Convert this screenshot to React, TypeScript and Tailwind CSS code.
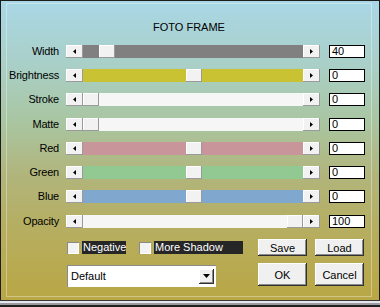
import React from "react";

type Row = { label: string; track: string; thumb: number; value: string };

const rows: Row[] = [
  { label: "Width", track: "bg-[#808080]", thumb: 16, value: "40" },
  { label: "Brightness", track: "bg-[#c9c233]", thumb: 103, value: "0" },
  { label: "Stroke", track: "bg-[#f6f6f6]", thumb: 0, value: "0" },
  { label: "Matte", track: "bg-[#f6f6f6]", thumb: 0, value: "0" },
  { label: "Red", track: "bg-[#c8959b]", thumb: 103, value: "0" },
  { label: "Green", track: "bg-[#92c892]", thumb: 103, value: "0" },
  { label: "Blue", track: "bg-[#80a8cf]", thumb: 103, value: "0" },
  { label: "Opacity", track: "bg-[#f6f6f6]", thumb: 204, value: "100" },
];

function Arrow({ dir }: { dir: "left" | "right" | "down" }) {
  if (dir === "down") {
    return (
      <svg width="7" height="4" viewBox="0 0 7 4">
        <polygon points="0,0 7,0 3.5,4" fill="#000" />
      </svg>
    );
  }
  return (
    <svg width="3" height="5" viewBox="0 0 3 5">
      <polygon points={dir === "left" ? "3,0 3,5 0,2.5" : "0,0 0,5 3,2.5"} fill="#000" />
    </svg>
  );
}

function ScrollBar({ track, thumb }: { track: string; thumb: number }) {
  return (
    <div className="flex h-[13px] w-[254px]">
      <div className="flex w-[17px] items-center justify-center bg-[#f2f2f2] shadow-[inset_-1px_-1px_#9a9a9a,inset_1px_1px_#ffffff]">
        <Arrow dir="left" />
      </div>
      <div className={`relative flex-1 ${track}`}>
        <div
          className="absolute top-0 h-[13px] w-[16px] bg-[#f2f2f2] shadow-[inset_-1px_-1px_#9a9a9a,inset_1px_1px_#ffffff]"
          style={{ left: thumb }}
        />
      </div>
      <div className="flex w-[17px] items-center justify-center bg-[#f2f2f2] shadow-[inset_-1px_-1px_#9a9a9a,inset_1px_1px_#ffffff]">
        <Arrow dir="right" />
      </div>
    </div>
  );
}

function Button({ label, tall }: { label: string; tall?: boolean }) {
  return (
    <div
      className={`flex w-[49px] items-center justify-center bg-[#f0f0f0] text-black shadow-[inset_-1px_-1px_#303030,inset_1px_1px_#ffffff,inset_-2px_-2px_#8a8a8a] ${
        tall ? "h-[23px]" : "h-[17px]"
      }`}
    >
      {label}
    </div>
  );
}

function Check({ label, width }: { label: string; width: string }) {
  return (
    <div className="flex items-center gap-[3px]">
      <div className="h-[12px] w-[12px] bg-[#f3f3f3] shadow-[inset_1px_1px_#8a8a8a,inset_-1px_-1px_#ffffff]" />
      <span className={`flex h-[13px] items-center bg-[#262626] px-[1px] leading-none text-white ${width}`}>
        {label}
      </span>
    </div>
  );
}

export default function App() {
  return (
    <div
      className="flex h-[307px] w-[380px] flex-col text-[11px] text-black"
      style={{ fontFamily: '"Liberation Sans", Arial, sans-serif' }}
    >
      <div className="flex-1 border-x border-t border-[#1c1c1c] bg-[linear-gradient(to_bottom,#a9d7e6_0%,#a9cfc6_22%,#a9c6a2_40%,#b1b57c_58%,#b6ad5e_78%,#b9a744_100%)] pb-[3px] pl-[5px] pr-[7px] pt-[2px]">
        <div className="h-full border border-white/35">
          <div className="pt-[16px] text-center leading-[14px]">FOTO FRAME</div>
          <div className="mt-[5px] flex flex-col">
            {rows.map((r) => (
              <div key={r.label} className="flex h-[24.3px] items-center">
                <div className="w-[52px] text-right leading-none tracking-[-0.2px]">{r.label}</div>
                <div className="ml-[7px]">
                  <ScrollBar track={r.track} thumb={r.thumb} />
                </div>
                <div className="ml-[9px] flex h-[13px] w-[36px] items-center border border-black bg-white pl-[2px] leading-none">
                  {r.value}
                </div>
              </div>
            ))}
          </div>
          <div className="ml-[60px] mt-[6px] flex">
            <div className="w-[191px]">
              <div className="flex h-[17px] items-center gap-[13px]">
                <Check label="Negative" width="w-[44px]" />
                <Check label="More Shadow" width="w-[89px]" />
              </div>
              <div className="mt-[9px] flex h-[22px] w-[149px] items-center justify-between bg-white pl-[4px] pr-[2px] shadow-[inset_1px_1px_#8a8a8a,inset_-1px_-1px_#ffffff]">
                <span className="leading-none">Default</span>
                <div className="flex h-[15px] w-[15px] items-center justify-center bg-[#f0f0f0] shadow-[inset_-1px_-1px_#303030,inset_1px_1px_#ffffff,inset_-2px_-2px_#8a8a8a]">
                  <Arrow dir="down" />
                </div>
              </div>
            </div>
            <div className="flex flex-col gap-[7px]">
              <div className="flex gap-[8px]">
                <Button label="Save" />
                <Button label="Load" />
              </div>
              <div className="flex gap-[8px]">
                <Button label="OK" tall />
                <Button label="Cancel" tall />
              </div>
            </div>
          </div>
        </div>
      </div>
      <div className="flex h-[7px] flex-col">
        <div className="h-[1px] bg-[#3a3a3a]" />
        <div className="h-[2px] bg-[#e6e6ee]" />
        <div className="h-[2px] bg-[#9a9aa0]" />
        <div className="h-[2px] bg-[#202020]" />
      </div>
    </div>
  );
}
